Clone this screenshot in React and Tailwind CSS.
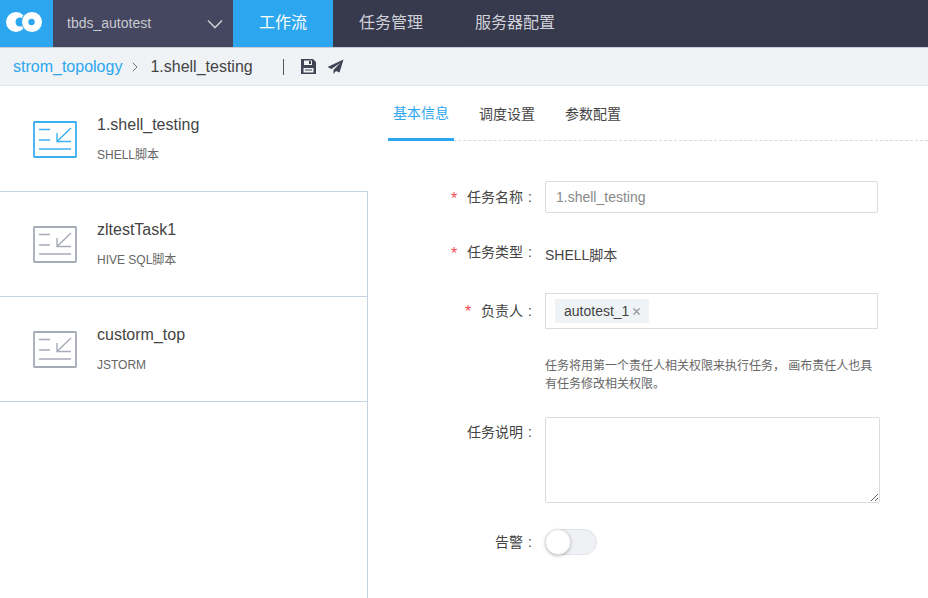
import { ChevronRight, X } from 'lucide-react';

const font = { fontFamily: '"Liberation Sans", "Noto Sans CJK SC", sans-serif' };

function TaskIcon({ active }) {
  const color = active ? '#3cb0f2' : '#a6abb8';
  return (
    <svg width="44" height="37" viewBox="0 0 44 37" fill="none" stroke={color} className="shrink-0">
      <rect x="1" y="1" width="42" height="35" rx="0.5" strokeWidth="1.8" />
      <path d="M6 8.500h11M6 19h11M6 28h32" strokeWidth="1.4" />
      <path d="M38 7 24 20.500M24 12v8.500h14" strokeWidth="1.4" />
    </svg>
  );
}

function TaskItem({ name, type, active }) {
  return (
    <div
      className={`flex h-[105px] items-start pl-[33px] ${
        active ? 'pt-[35px]' : 'border-t border-r border-[#c8d3e0] pt-[34px]'
      }`}
    >
      <TaskIcon active={active} />
      <div className="ml-[20px] -mt-[6px]">
        <div className="text-[16px] leading-[20px] text-[#444]">{name}</div>
        <div className="mt-[12px] text-[12px] leading-[16px] text-[#666]">{type}</div>
      </div>
    </div>
  );
}

function FieldLabel({ required, children }) {
  return (
    <div className="flex w-[157px] shrink-0 items-center justify-end pr-[13px] text-[14px] leading-[20px] text-[#444]">
      {required ? <span className="mr-[10px] mt-[3px] text-[16px] text-[#f04b55]">*</span> : null}
      <span>{children}</span>
      <span className="ml-[5px]">:</span>
    </div>
  );
}

export default function App() {
  return (
    <div className="flex h-[598px] w-[928px] flex-col overflow-hidden bg-white" style={font}>
      {/* Top bar */}
      <div className="flex h-[47px] shrink-0 bg-gradient-to-r from-[#383a4f] to-[#36384b] text-white">
        <div className="flex w-[53px] items-center justify-center bg-[#2ba6ef]">
          <svg width="36" height="20" viewBox="0 0 36 20" className="-ml-[5px] -mt-[3px]">
            <circle cx="10" cy="10" r="10" fill="#fff" />
            <circle cx="14" cy="10" r="4.500" fill="#2ba6ef" />
            <circle cx="26" cy="10" r="10.500" fill="#fff" stroke="#2ba6ef" />
            <circle cx="25.500" cy="10" r="3.200" fill="#2ba6ef" />
          </svg>
        </div>
        <div className="flex w-[180px] items-center justify-between bg-[#45465f] pl-[14px] pr-[10px]">
          <span className="text-[14px] text-[#c9cad2]">tbds_autotest</span>
          <svg width="16" height="10" viewBox="0 0 16 10" fill="none" stroke="#c9cad2" strokeWidth="1.6">
            <path d="M1 1.500 8 8.500 15 1.500" />
          </svg>
        </div>
        <div className="flex w-[100px] items-center justify-center bg-[#2ba6ef] pb-[2px] text-[16px]">工作流</div>
        <div className="flex items-center pb-[2px] pl-[26px] text-[16px] text-[#d0d1d8]">任务管理</div>
        <div className="flex items-center pb-[2px] pl-[52px] text-[16px] text-[#d0d1d8]">服务器配置</div>
      </div>

      {/* Breadcrumb */}
      <div className="flex h-[39px] shrink-0 items-center border-t border-b border-t-[#c9cdd8] border-b-[#dfe4ea] bg-[#eff3f6] pl-[13px]">
        <span className="text-[16px] text-[#2ba6ef]">strom_topology</span>
        <ChevronRight className="ml-[5px] h-[16px] w-[16px] text-[#70757e]" strokeWidth={1.5} />
        <span className="ml-[7px] text-[16px] text-[#444]">1.shell_testing</span>
        <span className="ml-[30px] h-[16px] w-px bg-[#555]" />
        <svg className="ml-[16px]" width="17" height="17" viewBox="0 0 17 17" fill="#3f4354">
          <path fillRule="evenodd" d="M1 1h12l3 3v12H1ZM4 2.500V7h8V2.500ZM3.500 10v4.500h10V10ZM9 3h2v3H9ZM5 11.500h7v1H5Z" />
        </svg>
        <svg className="ml-[10px]" width="17" height="16" viewBox="0 0 17 16" fill="#3f4354">
          <path d="M16.500 0.500 0.500 8 4.500 10 13 4 6.500 11 6.500 15 9 12 12.500 13.500Z" />
        </svg>
      </div>

      <div className="flex min-h-0 flex-1">
        {/* Task list */}
        <div className="flex w-[368px] shrink-0 flex-col">
          <TaskItem name="1.shell_testing" type="SHELL脚本" active />
          <TaskItem name="zltestTask1" type="HIVE SQL脚本" />
          <TaskItem name="custorm_top" type="JSTORM" />
          <div className="flex-1 border-t border-r border-[#c8d3e0]" />
        </div>

        {/* Detail panel */}
        <div className="ml-[20px] min-w-0 flex-1">
          <div className="flex h-[55px] items-stretch border-b border-dashed border-[#d9d9d9] text-[14px]">
            <div className="-mb-px flex w-[66px] items-center justify-center border-b-[3px] border-[#2ba6ef] pt-[3px] text-[#2ba6ef]">
              基本信息
            </div>
            <div className="ml-[25px] flex items-center pt-[2px] text-[#444]">调度设置</div>
            <div className="ml-[30px] flex items-center pt-[2px] text-[#444]">参数配置</div>
          </div>

          <div className="mt-[40px] flex h-[32px] items-center">
            <FieldLabel required>任务名称</FieldLabel>
            <div className="flex h-[32px] w-[333px] items-center rounded-[2px] border border-[#dcdcdc] pl-[10px] text-[14px] text-[#888]">
              1.shell_testing
            </div>
          </div>

          <div className="mt-[27px] flex h-[24px] items-center">
            <FieldLabel required>任务类型</FieldLabel>
            <span className="pt-[6px] text-[14px] text-[#444]">SHELL脚本</span>
          </div>

          <div className="mt-[29px] flex items-start">
            <div className="pt-[6px]">
              <FieldLabel required>负责人</FieldLabel>
            </div>
            <div className="flex h-[36px] w-[333px] items-center border border-[#dcdcdc] pl-[9px]">
              <span className="flex h-[24px] items-center bg-[#eff3f6] pl-[9px] pr-[7px] text-[14px] text-[#444]">
                autotest_1
                <X className="ml-[2px] h-[11px] w-[11px] text-[#8f949c]" strokeWidth={2.5} />
              </span>
            </div>
          </div>

          <p className="ml-[157px] mt-[28px] w-[333px] text-[12px] leading-[18px] text-[#666]">
            任务将用第一个责任人相关权限来执行任务， 画布责任人也具有任务修改相关权限。
          </p>

          <div className="mt-[24px] flex items-start">
            <div className="pt-[5px]">
              <FieldLabel>任务说明</FieldLabel>
            </div>
            <textarea
              className="h-[86px] w-[335px] rounded-[2px] border border-[#dcdcdc] outline-none"
              defaultValue=""
            />
          </div>

          <div className="mt-[26px] flex h-[26px] items-center">
            <FieldLabel>告警</FieldLabel>
            <div className="relative h-[26px] w-[52px] rounded-full border border-[#e0e3e8] bg-[#eff1f5]">
              <span className="absolute -left-px -top-px h-[26px] w-[26px] rounded-full border border-[#e3e3e3] bg-white shadow-[0_1px_3px_rgba(0,0,0,0.25)]" />
            </div>
          </div>
        </div>
      </div>
    </div>
  );
}
